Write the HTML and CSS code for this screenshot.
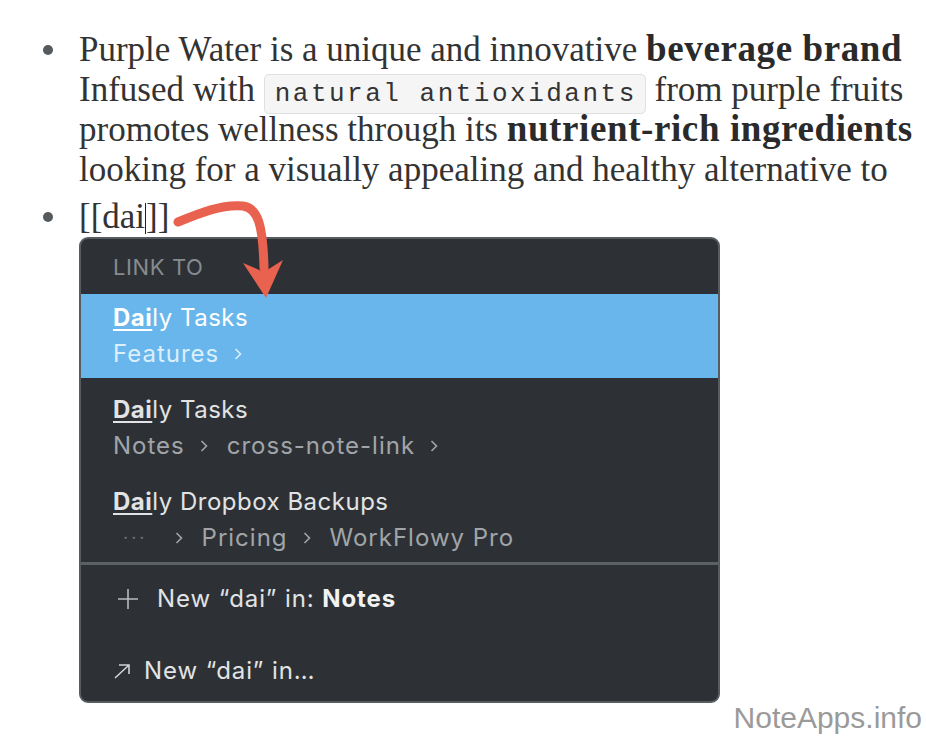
FILE: index.html
```html
<!DOCTYPE html>
<html>
<head>
<meta charset="utf-8">
<link rel="stylesheet" href="styles.css">
</head>
<body>
<div class="page">
  <ul class="outline">
    <li class="item">
      <span class="dot"></span>
      <div class="text">Purple Water is a unique and innovative <b>beverage brand</b><br>Infused with <code class="code">natural antioxidants</code> from purple fruits<br>promotes wellness through its <b>nutrient-rich ingredients</b><br>looking for a visually appealing and healthy alternative to</div>
    </li>
    <li class="item">
      <span class="dot"></span>
      <div class="text-col">
        <div class="text">[[dai<span class="caret"></span>]]</div>
        <div class="popup">
          <div class="popup-head">LINK TO</div>
          <div class="results">
            <div class="result selected">
              <div class="r-title"><u>Dai</u>ly Tasks</div>
              <div class="r-path"><span>Features</span><svg class="chev" viewBox="0 0 8 14"><path d="M1.5 2 L6.5 7 L1.5 12"/></svg></div>
            </div>
            <div class="result">
              <div class="r-title"><u>Dai</u>ly Tasks</div>
              <div class="r-path"><span>Notes</span><svg class="chev" viewBox="0 0 8 14"><path d="M1.5 2 L6.5 7 L1.5 12"/></svg><span>cross-note-link</span><svg class="chev" viewBox="0 0 8 14"><path d="M1.5 2 L6.5 7 L1.5 12"/></svg></div>
            </div>
            <div class="result">
              <div class="r-title"><u>Dai</u>ly Dropbox Backups</div>
              <div class="r-path"><span class="ellipsis">···</span><svg class="chev" viewBox="0 0 8 14"><path d="M1.5 2 L6.5 7 L1.5 12"/></svg><span>Pricing</span><svg class="chev" viewBox="0 0 8 14"><path d="M1.5 2 L6.5 7 L1.5 12"/></svg><span>WorkFlowy Pro</span></div>
            </div>
          </div>
          <div class="popup-foot">
            <div class="action"><svg class="plus" viewBox="0 0 20 20"><path d="M10 0 V20 M0 10 H20"/></svg><span>New “dai” in: <b>Notes</b></span></div>
            <div class="action"><svg class="ne" viewBox="0 0 18 16"><path d="M2 15 L16 2 M6 2 H16 V11"/></svg><span>New “dai” in…</span></div>
          </div>
        </div>
      </div>
    </li>
  </ul>
  <svg class="arrow" viewBox="0 0 926 740" width="926" height="740">
    <path d="M178 222 C 200 213, 222 204, 243 206 C 258 208, 263 225, 264 268" fill="none" stroke="#e8624f" stroke-width="9" stroke-linecap="round"/>
    <polygon points="243,263 264,272 283,260 266,298" fill="#e8624f"/>
  </svg>
  <div class="watermark">NoteApps.info</div>
</div>
</body>
</html>
```
FILE: styles.css
```css
html, body {
  margin: 0;
  padding: 0;
  background: #fff;
}
.page {
  position: relative;
  width: 926px;
  height: 740px;
  overflow: hidden;
}
.outline {
  list-style: none;
  margin: 0;
  padding: 30px 0 0 0;
  display: flex;
  flex-direction: column;
  gap: 7px;
}
.item {
  display: flex;
  align-items: flex-start;
}
.dot {
  flex: none;
  width: 10px;
  height: 10px;
  border-radius: 50%;
  background: #555a5e;
  margin: 15px 26px 0 43px;
}
.text {
  font-family: "Liberation Serif", serif;
  font-size: 35px;
  line-height: 40px;
  color: #333;
  white-space: nowrap;
}
.text b {
  font-weight: 700;
  font-size: 37px;
  line-height: 1;
  letter-spacing: 0.6px;
  color: #2a2a2a;
}
.code {
  font-family: "Liberation Mono", monospace;
  font-size: 26px;
  line-height: 1;
  letter-spacing: 2.5px;
  padding: 4px 8px 4px 10px;
  background: #f5f5f5;
  border: 1px solid #e0e0e0;
  border-radius: 5px;
  color: #333;
}
.caret {
  display: inline-block;
  width: 1px;
  height: 31px;
  background: #222;
  vertical-align: -6px;
}
.text-col {
  display: flex;
  flex-direction: column;
}
.popup {
  width: 641px;
  height: 466px;
  box-sizing: border-box;
  background: #2d3135;
  border: 2px solid #575c61;
  border-radius: 9px;
  overflow: hidden;
  font-family: Inter, "Noto Sans", sans-serif;
  display: flex;
  flex-direction: column;
}
.popup-head {
  height: 55px;
  box-sizing: border-box;
  padding: 14px 0 0 32px;
  font-size: 22px;
  line-height: 28px;
  color: #868b90;
  letter-spacing: 0.6px;
}
.results {
  display: flex;
  flex-direction: column;
  gap: 8px;
}
.result {
  height: 84px;
  box-sizing: border-box;
  padding: 6px 0 6px 32px;
}
.result.selected {
  background: #68b6eb;
}
.r-title {
  font-size: 24px;
  line-height: 36px;
  letter-spacing: 0.5px;
  color: #e2e3e4;
}
.r-title u {
  font-weight: 700;
  text-decoration-thickness: 2px;
  text-underline-offset: 3px;
}
.r-path {
  display: flex;
  align-items: center;
  gap: 15px;
  font-size: 24px;
  line-height: 36px;
  letter-spacing: 1px;
  color: #a1a5a9;
}
.selected .r-title {
  color: #fff;
}
.selected .r-path {
  color: #dcefff;
}
.chev {
  width: 8px;
  height: 14px;
  margin-right: 4px;
  fill: none;
  stroke: currentColor;
  stroke-width: 1.6;
}
.ellipsis {
  color: #6f7479;
  font-size: 18px;
  letter-spacing: 3px;
  padding-left: 10px;
  padding-right: 12px;
}
.popup-foot {
  border-top: 3px solid #5b6065;
  padding: 16px 0 0 32px;
  display: flex;
  flex-direction: column;
  gap: 36px;
}
.action {
  display: flex;
  align-items: center;
  gap: 19px;
  font-size: 24px;
  line-height: 36px;
  letter-spacing: 0.9px;
  color: #e2e3e4;
}
.action b {
  font-weight: 700;
  color: #f2f2f2;
}
.plus {
  width: 20px;
  height: 20px;
  margin-left: 5px;
  fill: none;
  stroke: #b8bbbe;
  stroke-width: 1.6;
}
.ne {
  width: 18px;
  height: 16px;
  fill: none;
  stroke: #d0d2d4;
  stroke-width: 1.6;
  margin-right: -6px;
}
.arrow {
  position: absolute;
  left: 0;
  top: 0;
  pointer-events: none;
}
.watermark {
  position: absolute;
  right: 4px;
  bottom: 5px;
  font-family: "Liberation Sans", Arial, sans-serif;
  font-size: 30px;
  color: #9a9a9a;
}
```
